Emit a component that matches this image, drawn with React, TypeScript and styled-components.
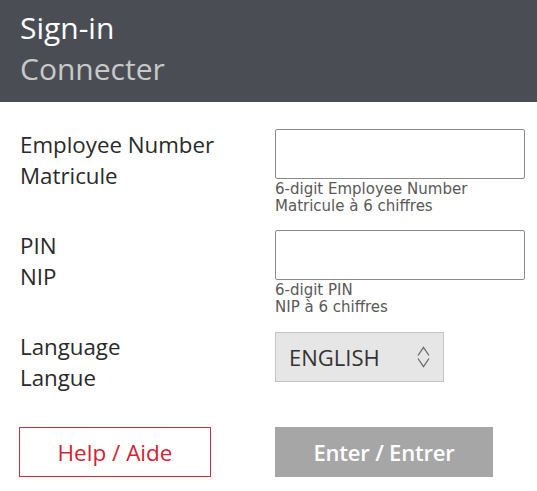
import styled, { createGlobalStyle } from "styled-components";

const GlobalStyle = createGlobalStyle`
  body {
    margin: 0;
    background: #ffffff;
    font-family: "Open Sans", "Liberation Sans", sans-serif;
  }
`;

const Header = styled.header`
  background: #4a4e54;
  height: 102px;
  box-sizing: border-box;
  padding: 7px 20px 0;
  font-size: 30px;
  line-height: 41px;
`;

const Title = styled.div<{ $sub?: boolean }>`
  color: ${(p) => (p.$sub ? "#c9c9c9" : "#ffffff")};
`;

const Form = styled.form`
  padding: 27px 20px 0;
  display: grid;
  grid-template-columns: 255px 250px;
  row-gap: 15px;
`;

const Label = styled.label`
  font-size: 22.3px;
  line-height: 31px;
  color: #2a2a2a;
`;

const Field = styled.div`
  display: flex;
  flex-direction: column;
`;

const Input = styled.input`
  box-sizing: border-box;
  width: 250px;
  height: 50px;
  border: 1px solid #8a8a8a;
  border-radius: 2px;
  background: #fff;
  font-size: 20px;
  padding: 0 12px;
  margin: 0;
`;

const Hint = styled.div`
  font-family: "DejaVu Sans", Verdana, sans-serif;
  font-size: 15px;
  line-height: 17px;
  color: #595959;
  padding-top: 2px;
`;

const Select = styled.div`
  box-sizing: border-box;
  width: 169px;
  height: 50px;
  margin-top: 1px;
  background: #e6e6e6;
  border: 1px solid #c4c4c4;
  display: flex;
  align-items: center;
  justify-content: space-between;
  padding: 0 13px 0 13px;
  font-size: 22px;
  color: #333;
`;

const ButtonRow = styled.div`
  grid-column: 1 / -1;
  display: grid;
  grid-template-columns: 255px 250px;
  margin-top: 19px;
`;

const HelpButton = styled.button`
  box-sizing: border-box;
  width: 192px;
  height: 50px;
  margin-left: -1px;
  background: #fff;
  border: 1px solid #c0343f;
  color: #d42232;
  font-family: "Open Sans", sans-serif;
  font-size: 22.5px;
`;

const EnterButton = styled.button`
  box-sizing: border-box;
  width: 218px;
  height: 50px;
  background: #a6a6a6;
  border: none;
  color: #fff;
  font-family: "Open Sans", sans-serif;
  font-weight: 600;
  font-size: 22px;
  letter-spacing: -0.2px;
`;

const UpDown = () => (
  <svg width="13" height="22" viewBox="0 0 13 22" fill="none" stroke="#6a6a6a" strokeWidth="1.3">
    <polyline points="1,9.5 6.5,1.5 12,9.5" />
    <polyline points="1,12.5 6.5,20.5 12,12.5" />
  </svg>
);

export default function App() {
  return (
    <>
      <GlobalStyle />
      <Header>
        <Title>Sign-in</Title>
        <Title $sub>Connecter</Title>
      </Header>
      <Form>
        <Label>
          Employee Number
          <br />
          Matricule
        </Label>
        <Field>
          <Input />
          <Hint>
            6-digit Employee Number
            <br />
            Matricule à 6 chiffres
          </Hint>
        </Field>
        <Label>
          PIN
          <br />
          NIP
        </Label>
        <Field>
          <Input type="password" />
          <Hint>
            6-digit PIN
            <br />
            NIP à 6 chiffres
          </Hint>
        </Field>
        <Label>
          Language
          <br />
          Langue
        </Label>
        <Field>
          <Select>
            ENGLISH
            <UpDown />
          </Select>
        </Field>
        <ButtonRow>
          <HelpButton type="button">Help / Aide</HelpButton>
          <EnterButton type="button">Enter / Entrer</EnterButton>
        </ButtonRow>
      </Form>
    </>
  );
}
